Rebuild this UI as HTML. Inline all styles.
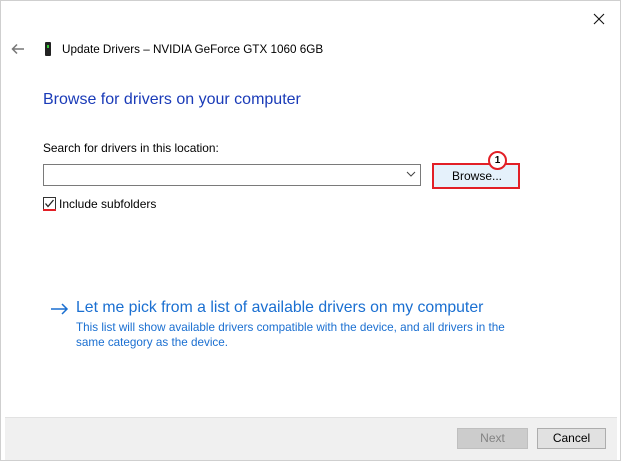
<!DOCTYPE html>
<html><head><style>
*{margin:0;padding:0;box-sizing:border-box}
body{width:622px;height:462px;background:#fff;font-family:"Liberation Sans",sans-serif;position:relative;overflow:hidden;color:#000}
.a{position:absolute}
.win{left:0;top:0;width:621px;height:461px;border:1px solid #cfcfcf;background:#fff}
.t{font-size:12px;white-space:nowrap}
</style></head><body>
<div class="a win"></div>
<svg class="a" style="left:593px;top:13px" width="12" height="12"><path d="M1 1L11 11M11 1L1 11" stroke="#111" stroke-width="1.1"/></svg>
<svg class="a" style="left:11px;top:43px" width="14" height="12"><path d="M13 6H2M6 1.5L1.5 6L6 10.5" stroke="#777" stroke-width="1.5" fill="none"/></svg>
<div class="a" style="left:45px;top:42px;width:6px;height:14px;background:#222;border-radius:1px"></div>
<div class="a" style="left:47px;top:45px;width:2px;height:3px;background:#3c3"></div>
<div class="t a" style="left:62px;top:43px;font-size:11.7px">Update Drivers – NVIDIA GeForce GTX 1060 6GB</div>
<div class="t a" style="left:43px;top:91px;font-size:16px;color:#1a3bb8">Browse for drivers on your computer</div>
<div class="t a" style="left:43px;top:141px;font-size:11.9px">Search for drivers in this location:</div>
<div class="a" style="left:43px;top:164px;width:378px;height:22px;border:1px solid #7a7a7a"></div>
<svg class="a" style="left:406px;top:171px" width="10" height="7"><path d="M1 1L5 5L9 1" stroke="#444" fill="none"/></svg>
<div class="a" style="left:432px;top:163px;width:88px;height:26px;border:2px solid #e21f26;background:#e5f1fb"></div>
<div class="t a" style="left:452px;top:169px">Browse...</div>
<div class="a" style="left:488px;top:151px;width:19px;height:19px;border:2px solid #e21f26;border-radius:50%;background:#fff;font-size:10px;font-weight:bold;text-align:center;line-height:15px">1</div>
<div class="a" style="left:43px;top:197px;width:13px;height:13px;border:1px solid #333;background:#fff"></div>
<div class="a" style="left:43px;top:209px;width:13px;height:2px;background:#e21f26"></div>
<svg class="a" style="left:44px;top:198px" width="11" height="11"><path d="M1.5 5.5L4 8.5L9.5 2" stroke="#222" stroke-width="1.3" fill="none"/></svg>
<div class="t a" style="left:59px;top:197px">Include subfolders</div>
<svg class="a" style="left:50px;top:302px" width="20" height="14"><path d="M1 7H17M12 2L17 7L12 12" stroke="#1a6fd1" stroke-width="1.5" fill="none"/></svg>
<div class="t a" style="left:76px;top:299px;font-size:15.8px;color:#1a6fd1">Let me pick from a list of available drivers on my computer</div>
<div class="t a" style="left:76px;top:320px;font-size:11.7px;color:#1a6fd1;line-height:15px">This list will show available drivers compatible with the device, and all drivers in the<br>same category as the device.</div>
<div class="a" style="left:5px;top:417px;width:612px;height:43px;background:#f0f0f0;border-top:1px solid #e2e2e2"></div>
<div class="a t" style="left:457px;top:428px;width:71px;height:21px;border:1px solid #bfbfbf;background:#cccccc;color:#838383;text-align:center;line-height:19px">Next</div>
<div class="a t" style="left:537px;top:428px;width:69px;height:21px;border:1px solid #adadad;background:#e1e1e1;text-align:center;line-height:19px">Cancel</div>
</body></html>
